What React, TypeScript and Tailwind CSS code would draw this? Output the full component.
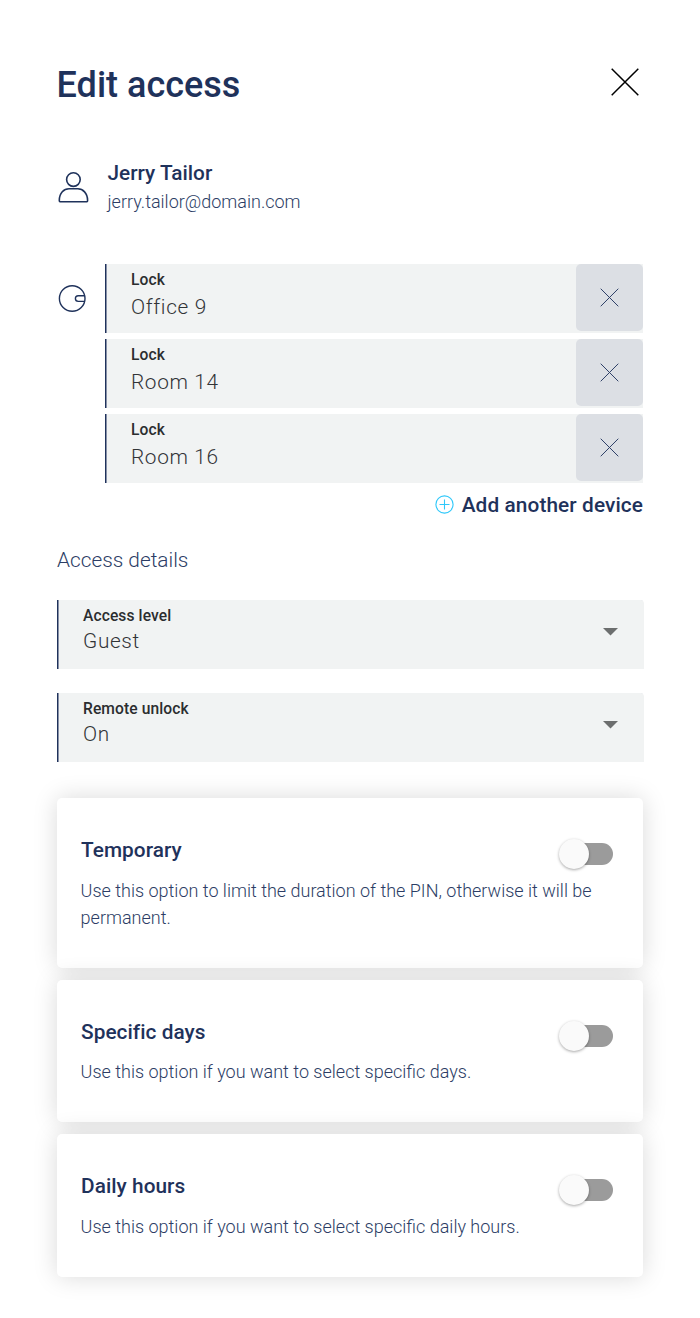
import React from 'react';

function Cross({ size, w, color }: { size: number; w: number; color: string }) {
  return (
    <svg width={size} height={size} viewBox={`0 0 ${size} ${size}`} fill="none" stroke={color} strokeWidth={w}>
      <path d={`M.7 .7L${size - 0.7} ${size - 0.7}M${size - 0.7} .7L.7 ${size - 0.7}`} />
    </svg>
  );
}

function Device({ name }: { name: string }) {
  return (
    <div className="flex h-[69px] justify-between border-l border-[#1f325b] bg-[#f1f3f3] shadow-[inset_1px_0_0_#8790a7]">
      <div className="pl-[25px] pt-1.5">
        <div className="text-[15.6px] leading-5 font-medium tracking-[0.1px] text-[#2b2d2f]">Lock</div>
        <div className="mt-[3px] text-[20.8px] leading-7 font-light tracking-[0.65px] text-[#313437]">{name}</div>
      </div>
      <button className="flex h-[67px] w-[67px] items-center justify-center rounded-[5px] bg-[#dcdfe4] pr-px" aria-label="Remove">
        <Cross size={19} w={1} color="#2f4068" />
      </button>
    </div>
  );
}

function Field({ label, value }: { label: string; value: string }) {
  return (
    <div className="flex h-[69px] justify-between rounded-tr-[4px] border-l border-[#1f325b] bg-[#f1f3f3] shadow-[inset_1px_0_0_#8790a7]">
      <div className="pl-[25px] pt-1.5">
        <div className="text-[15.6px] leading-5 font-medium tracking-[0.1px] text-[#2b2d2f]">{label}</div>
        <div className="mt-px text-[20.8px] leading-7 font-light tracking-[0.65px] text-[#313437]">{value}</div>
      </div>
      <svg className="mt-7 mr-[26.5px]" width="15" height="8" viewBox="0 0 15 8">
        <path d="M0 0H15L7.5 7.5Z" fill="#6c6e6e" />
      </svg>
    </div>
  );
}

function Option({ title, text, height, gap }: { title: string; text: string; height: string; gap: string }) {
  return (
    <section className={`${height} rounded-[5px] bg-white px-6 pt-[38px] shadow-[0_0_24px_rgba(0,0,0,0.15)]`}>
      <div className="flex h-7 justify-between">
        <h2 className="text-[20.8px] leading-7 font-medium tracking-[0.05px] text-[#1f325b]">{title}</h2>
        <div className="mt-[7px] mr-1.5 flex h-[22px] w-[53px] items-center rounded-full bg-[#9b9b9b]">
          <div className="-ml-px h-[30px] w-[30px] shrink-0 rounded-full bg-[#fafafa] shadow-[0_1px_3px_rgba(0,0,0,0.35)]" />
        </div>
      </div>
      <p className={`${gap} -ml-[0.4px] w-[530px] text-[18px] leading-[27px] font-light text-[#2c3d65]`}>{text}</p>
    </section>
  );
}

export default function App() {
  return (
    <main className="h-[1318px] w-[700px] bg-white px-[57px] pt-[61px] font-['Roboto',sans-serif]">
      <header className="flex h-12 justify-between">
        <h1 className="-ml-[0.4px] text-[36px] leading-[48px] font-medium text-[#1f325b]">Edit access</h1>
        <button className="mt-[7px] mr-1 h-7" aria-label="Close"><Cross size={28} w={1.5} color="#000" /></button>
      </header>
      <div className="mt-[49px] flex h-[60px]">
        <svg className="mt-3" width="33" height="33" viewBox="0 0 33 33" fill="none" stroke="#1f325b" strokeWidth="1.6">
          <circle cx="16.4" cy="9.6" r="6.8" />
          <path d="M3 31.7Q2.3 31.7 2.3 30.5C2.3 23 7 18.8 12 18.8H20.8C25.8 18.8 30.6 23 30.6 30.5Q30.6 31.7 29.9 31.7Z" />
        </svg>
        <div className="ml-[17.5px]">
          <div className="text-[20.8px] leading-[30px] font-medium text-[#1f325b]">Jerry Tailor</div>
          <div className="text-[18px] leading-[27px] font-light text-[#2c3d65]">jerry.tailor@domain.com</div>
        </div>
      </div>
      <div className="mt-[46px] flex justify-between">
        <svg className="mt-5" width="30" height="30" viewBox="0 0 30 30" fill="none" stroke="#1f325b" strokeWidth="1.4">
          <circle cx="15.2" cy="14.5" r="12.8" />
          <path d="M27.8 11.8H21.2a2.8 2.8 0 0 0 0 5.6H27.8" />
        </svg>
        <div className="flex w-[538px] flex-col gap-1.5">
          <Device name="Office 9" />
          <Device name="Room 14" />
          <Device name="Room 16" />
        </div>
      </div>
      <div className="mt-2 flex h-7 items-center justify-end gap-2">
        <svg className="-mt-0.5" width="19" height="19" viewBox="0 0 19 19" fill="none" stroke="#2fc8fa" strokeWidth="1.1">
          <circle cx="9.5" cy="9.5" r="8.6" /><path d="M9.5 4.5V14.5M4.5 9.5H14.5" />
        </svg>
        <span className="text-[20.8px] leading-7 font-medium tracking-[0.1px] text-[#1f325b]">Add another device</span>
      </div>
      <div className="mt-[26px] text-[20.8px] leading-[30px] font-light text-[#2c3d65]">Access details</div>
      <div className="-mr-px mt-[25px] flex flex-col gap-6">
        <Field label="Access level" value="Guest" />
        <Field label="Remote unlock" value="On" />
      </div>
      <div className="mt-9 flex flex-col gap-3">
        <Option height="h-[170px]" gap="mt-[13px]" title="Temporary" text="Use this option to limit the duration of the PIN, otherwise it will be permanent." />
        <Option height="h-[142px]" gap="mt-3" title="Specific days" text="Use this option if you want to select specific days." />
        <Option height="h-[143px]" gap="mt-[13px]" title="Daily hours" text="Use this option if you want to select specific daily hours." />
      </div>
    </main>
  );
}
